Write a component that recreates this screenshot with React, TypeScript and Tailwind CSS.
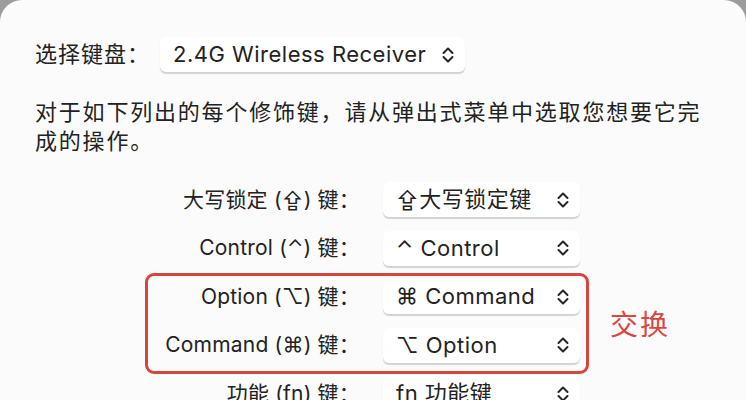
import React from "react";

const font = { fontFamily: 'Inter, "Noto Sans CJK SC", "DejaVu Sans", sans-serif' };

function Chevron() {
  return (
    <svg width="14" height="20" viewBox="0 0 14 20" className="shrink-0">
      <path d="M2.5 8 L7 3.5 L11.5 8" fill="none" stroke="#262626" strokeWidth="2" strokeLinecap="round" strokeLinejoin="round" />
      <path d="M2.5 12 L7 16.5 L11.5 12" fill="none" stroke="#262626" strokeWidth="2" strokeLinecap="round" strokeLinejoin="round" />
    </svg>
  );
}

function Popup({ children, className }: { children: React.ReactNode; className?: string }) {
  return (
    <div
      className={
        "flex items-center justify-between h-[35px] pl-[13px] pr-[10px] bg-white rounded-[6px] shadow-[0_1.5px_1px_rgba(0,0,0,0.16)] " +
        (className ?? "")
      }
    >
      <span className="text-[22px] tracking-[0.5px] text-[#222] whitespace-nowrap">{children}</span>
      <Chevron />
    </div>
  );
}

const rows = [
  { label: "大写锁定 (⇪) 键：", value: "⇪大写锁定键" },
  { label: "Control (⌃) 键：", value: "⌃ Control" },
  { label: "Option (⌥) 键：", value: "⌘ Command" },
  { label: "Command (⌘) 键：", value: "⌥ Option" },
  { label: "功能 (fn) 键：", value: "fn 功能键" },
];

export default function App() {
  return (
    <div className="w-[746px] h-[400px] bg-[#9c9c9c] overflow-hidden" style={font}>
      <div className="relative w-full h-full bg-[#fbfbfb] rounded-t-[22px] pl-[35px] pt-[37px]">
        {/* Keyboard select */}
        <div className="flex items-center">
          <span className="text-[22px] tracking-[1px] text-[#222] w-[125px]">选择键盘：</span>
          <Popup className="w-[305px]">2.4G Wireless Receiver</Popup>
        </div>

        {/* Description */}
        <p className="mt-[26px] text-[22px] leading-[29px] tracking-[1.8px] text-[#222] w-[690px]">
          对于如下列出的每个修饰键，请从弹出式菜单中选取您想要它完成的操作。
        </p>

        {/* Modifier rows */}
        <div className="relative mt-[26px] flex flex-col gap-[13.5px]">
          {rows.map((r) => (
            <div key={r.label} className="flex items-center">
              <span className="w-[325px] text-right text-[21px] tracking-[0.2px] text-[#222] whitespace-nowrap">{r.label}</span>
              <Popup className="ml-[23px] w-[197px]">{r.value}</Popup>
            </div>
          ))}
          <div className="absolute left-[110px] top-[91px] w-[444px] h-[101px] border-[3px] border-[#d5463c] rounded-[9px]" />
          <span className="absolute left-[575px] top-[122px] text-[28px] text-[#d9473f] tracking-[2px]">交换</span>
        </div>
      </div>
    </div>
  );
}
